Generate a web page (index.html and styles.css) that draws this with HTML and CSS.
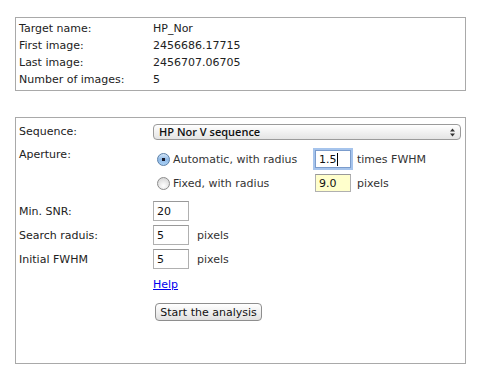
FILE: index.html
```html
<!DOCTYPE html>
<html lang="en">
<head>
    <meta charset="UTF-8">
    <title>Photometry analysis</title>
    <link rel="stylesheet" href="styles.css">
</head>
<body>
    <div class="page">
        <div class="panel info">
            <div class="info-row"><span class="key">Target name:</span><span>HP_Nor</span></div>
            <div class="info-row"><span class="key">First image:</span><span>2456686.17715</span></div>
            <div class="info-row"><span class="key">Last image:</span><span>2456707.06705</span></div>
            <div class="info-row"><span class="key">Number of images:</span><span>5</span></div>
        </div>

        <form class="panel settings">
            <div class="row seq-row">
                <label class="key" for="sequence">Sequence:</label>
                <div class="select-wrap">
                    <select id="sequence">
                        <option>HP Nor V sequence</option>
                    </select>
                    <svg class="select-arrows" width="7" height="9" viewBox="0 0 7 9">
                        <path d="M3.5 0.5 L6 3.5 L1 3.5 Z M3.5 8.5 L6 5.5 L1 5.5 Z" fill="#333"/>
                    </svg>
                </div>
            </div>

            <div class="row aperture-row">
                <span class="key">Aperture:</span>
                <div class="aperture">
                    <label class="radio-label"><input type="radio" name="ap" checked> Automatic, with radius</label>
                    <span class="field focused"><input type="text" value="1.5" class="num"><span class="caret"></span></span>
                    <span class="unit">times FWHM</span>

                    <label class="radio-label"><input type="radio" name="ap"> Fixed, with radius</label>
                    <span class="field"><input type="text" value="9.0" class="num fixed"></span>
                    <span class="unit">pixels</span>
                </div>
            </div>

            <div class="row num-row">
                <label class="key" for="snr">Min. SNR:</label>
                <div class="num-group"><input id="snr" type="text" value="20" class="num"></div>
            </div>
            <div class="row num-row">
                <label class="key" for="radius">Search raduis:</label>
                <div class="num-group"><input id="radius" type="text" value="5" class="num"><span class="unit">pixels</span></div>
            </div>
            <div class="row num-row">
                <label class="key" for="fwhm">Initial FWHM</label>
                <div class="num-group"><input id="fwhm" type="text" value="5" class="num"><span class="unit">pixels</span></div>
            </div>

            <div class="row help-row">
                <span></span>
                <a href="#">Help</a>
            </div>

            <div class="row button-row">
                <span></span>
                <button type="button">Start the analysis</button>
            </div>
        </form>
    </div>
</body>
</html>
```

FILE: styles.css
```css
* {
    box-sizing: border-box;
}

body {
    margin: 0;
    background: #fff;
    color: #222;
    font-family: "DejaVu Sans", Verdana, sans-serif;
    font-size: 11px;
}

.page {
    padding: 17px 0 0 15px;
}

.panel {
    width: 451px;
    border: 1px solid #a9a9a9;
}

/* target summary */
.info {
    padding: 2px 3px;
}

.info-row {
    display: grid;
    grid-template-columns: 134px 1fr;
    height: 17px;
    line-height: 17px;
}

/* analysis settings */
.settings {
    margin-top: 26px;
    height: 247px;
    padding: 4px 3px 0 3px;
}

.row {
    display: grid;
    grid-template-columns: 134px 1fr;
}

.seq-row {
    height: 20px;
    line-height: 20px;
}

.select-wrap {
    position: relative;
    margin-top: 2px;
    width: 308px;
    height: 16px;
}

.select-wrap select {
    appearance: none;
    -webkit-appearance: none;
    display: block;
    width: 100%;
    height: 16px;
    margin: 0;
    padding: 0 0 0 5px;
    border: 1px solid #9a9a9a;
    border-radius: 4px;
    background: linear-gradient(#ffffff, #f1f1f1 50%, #e4e4e4);
    font-family: "Open Sans", "DejaVu Sans", sans-serif;
    font-size: 11px;
    font-weight: 600;
    color: #111;
    line-height: 14px;
}

.select-arrows {
    position: absolute;
    right: 5px;
    top: 4px;
}

.aperture-row {
    margin-top: 5px;
}

.aperture-row .key {
    line-height: 16px;
}

.aperture {
    display: grid;
    grid-template-columns: 162px 37px auto;
    grid-auto-rows: 24px;
    align-items: center;
}

.radio-label {
    display: flex;
    align-items: center;
    color: #333;
}

.radio-label input {
    appearance: none;
    -webkit-appearance: none;
    width: 13px;
    height: 13px;
    margin: 0 3px 0 4px;
    border: 1px solid #8c8c8c;
    border-radius: 50%;
    background: radial-gradient(circle at 50% 70%, #ffffff, #e2e2e2 60%, #cfcfcf);
}

.radio-label input:checked {
    border-color: #5a7fa8;
    background: radial-gradient(circle, #1a1a2a 0, #1a1a2a 1.5px, transparent 2px),
                linear-gradient(#d4e6f8, #8fb9e6 50%, #a9d0f5);
}

.field {
    position: relative;
    display: block;
    width: 37px;
}

.num {
    display: block;
    width: 36px;
    height: 20px;
    margin: 0;
    padding: 1px 3px 0 3px;
    border: 1px solid #b0b0b0;
    border-top-color: #999;
    font-family: "DejaVu Sans", Verdana, sans-serif;
    font-size: 11px;
    color: #111;
    background: #fff;
}

.aperture .num {
    height: 18px;
}

.focused .num {
    border: 1px solid #7b9ccc;
    box-shadow: 0 0 0 2px #a6c4ec;
    outline: none;
}

.caret {
    position: absolute;
    left: 22px;
    top: 3px;
    width: 1px;
    height: 13px;
    background: #000;
}

.num.fixed {
    background: #ffffcc;
}

.unit {
    margin-left: 5px;
    color: #333;
}

.num-row {
    height: 24px;
    align-items: center;
}

.aperture-row + .num-row {
    margin-top: 4px;
}

.num-group {
    display: flex;
    align-items: center;
}

.num-group .unit {
    margin-left: 8px;
}

.help-row {
    margin-top: 6px;
    line-height: 16px;
}

.help-row a {
    color: #0000ee;
}

.button-row {
    margin-top: 10px;
}

button {
    justify-self: start;
    margin-left: 2px;
    width: 107px;
    height: 18px;
    padding: 0;
    border: 1px solid #8e8e8e;
    border-radius: 4px;
    background: linear-gradient(#ffffff, #f0f0f0 50%, #e0e0e0);
    font-family: "DejaVu Sans", Verdana, sans-serif;
    font-size: 11px;
    color: #111;
}
```
